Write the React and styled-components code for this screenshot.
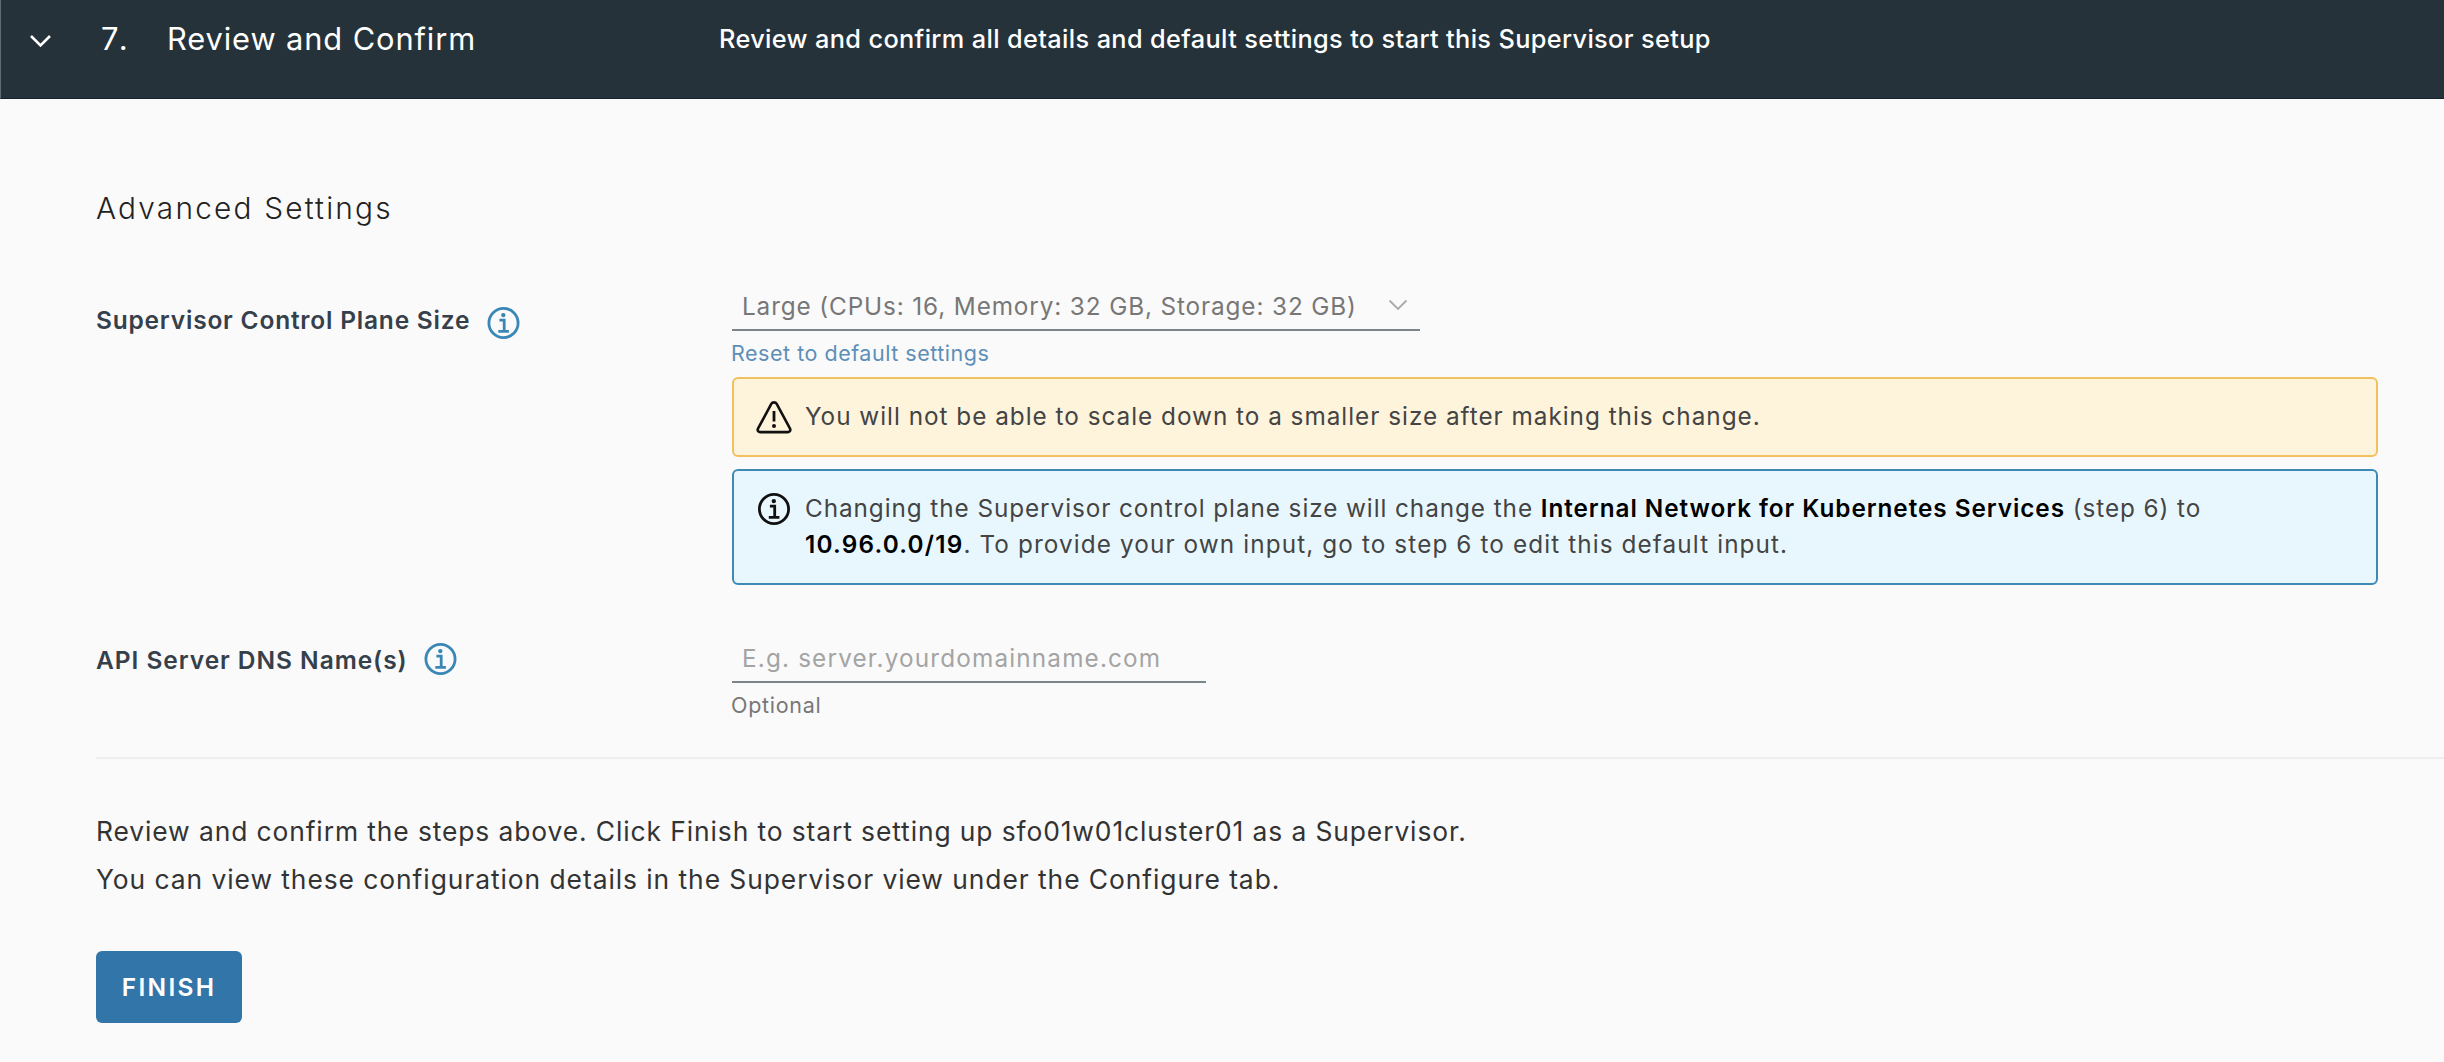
import React from "react";
import styled, { createGlobalStyle } from "styled-components";

const GlobalStyle = createGlobalStyle`
  * { box-sizing: border-box; }
  body {
    margin: 0;
    background: #fafafa;
    font-family: Inter, "Open Sans", sans-serif;
    font-weight: 400;
    color: #444;
  }
`;

const Page = styled.main`
  min-height: 1062px;
  overflow: hidden;
`;

const StepHeader = styled.header`
  height: 99px;
  display: flex;
  align-items: flex-start;
  padding-top: 14px;
  background: #25323a;
  border-left: 1px solid #5d6b73;
  border-bottom: 1px solid #17242b;
  color: #fff;
  font-weight: 500;
  white-space: nowrap;
`;

const HeaderCaret = styled.svg`
  width: 23px;
  height: 16px;
  margin: 19px 0 0 28px;
`;

const StepNumber = styled.span`
  width: 66px;
  margin-left: 49px;
  font-size: 31px;
  font-weight: 400;
  line-height: 50px;
  letter-spacing: 4px;
`;

const StepTitle = styled.h2`
  width: 552px;
  margin: 0;
  font-size: 30.8px;
  font-weight: 400;
  line-height: 50px;
  letter-spacing: 0.9px;
`;

const StepSummary = styled.span`
  font-size: 25.3px;
  line-height: 50px;
  letter-spacing: 0.36px;
`;

const Body = styled.section`
  padding: 89px 0 0 96px;
`;

const SectionTitle = styled.h3`
  margin: 0;
  font-size: 29.8px;
  font-weight: 300;
  line-height: 40px;
  letter-spacing: 2.2px;
  color: #222;
`;

const FormRow = styled.div`
  display: grid;
  grid-template-columns: 636px 1646px;
  margin-top: ${(p) => p.$top}px;
`;

const Label = styled.div`
  display: flex;
  align-items: flex-start;
  gap: ${(p) => p.$gap}px;
  padding-top: ${(p) => p.$drop}px;
  font-size: 24.5px;
  font-weight: 600;
  line-height: 36px;
  letter-spacing: ${(p) => p.$track}px;
  color: #36404a;
  white-space: nowrap;
`;

const LabelIcon = styled.svg`
  width: 33px;
  height: 33px;
  margin-top: ${(p) => p.$drop}px;
  color: #3a87b5;
`;

const Control = styled.div`
  min-width: 0;
`;

const Field = styled.div`
  width: ${(p) => p.$width}px;
  height: 43px;
  display: flex;
  justify-content: space-between;
  padding: 0 12px 0 10px;
  border-bottom: 2px solid #7b858c;
  font-size: 24.3px;
  line-height: 36px;
  letter-spacing: ${(p) => p.$track}px;
  color: ${(p) => p.$color};
  white-space: nowrap;
`;

const FieldCaret = styled.svg`
  width: 20px;
  height: 12px;
  margin-top: 11px;
`;

const Hint = styled.div`
  margin: 7px 0 0 -1px;
  font-size: 21.5px;
  line-height: 30px;
  letter-spacing: ${(p) => p.$track}px;
  color: ${(p) => p.$color};
`;

const Alert = styled.div`
  display: flex;
  gap: 13px;
  height: ${(p) => p.$height}px;
  margin-top: ${(p) => p.$top}px;
  padding: 19px 22px;
  border: 2px solid ${(p) => p.$border};
  border-radius: 6px;
  background: ${(p) => p.$fill};
`;

const AlertIcon = styled.svg`
  flex: none;
  width: 36px;
  height: 33px;
  margin-top: 3px;
  color: #111;
`;

const AlertText = styled.div`
  font-size: 24.3px;
  line-height: 36px;
  white-space: nowrap;
`;

const AlertLine = styled.p`
  margin: 0;
  letter-spacing: ${(p) => p.$track}px;
`;

const Strong = styled.b`
  font-weight: 600;
  letter-spacing: ${(p) => p.$track}px;
  color: #000;
`;

const Divider = styled.hr`
  height: 2px;
  margin: 37px 0 48px;
  border: 0;
  background: #eeeeee;
`;

const Closing = styled.p`
  margin: 0;
  font-size: 26.4px;
  line-height: 48px;
  letter-spacing: ${(p) => p.$track}px;
  color: #333;
`;

const FinishButton = styled.button`
  width: 146px;
  height: 72px;
  margin-top: 48px;
  padding: 0;
  border: 0;
  border-radius: 6px;
  background: #3276a9;
  color: #fff;
  font-family: inherit;
  font-size: 24.5px;
  font-weight: 600;
  letter-spacing: 2.3px;
`;

const InfoShape = () => (
  <g fill="none" stroke="currentColor" strokeWidth="2.8">
    <circle cx="16.5" cy="16" r="14.6" />
    <circle cx="16.3" cy="8.1" r="2.2" fill="currentColor" stroke="none" />
    <path d="M12.4 13.2h4.8v11.4M11.3 24.3h10.6" />
  </g>
);

const LabelInfo = ({ drop }) => (
  <LabelIcon $drop={drop} viewBox="0 0 33 33">
    <InfoShape />
  </LabelIcon>
);

export default function App() {
  return (
    <Page>
      <GlobalStyle />
      <StepHeader>
        <HeaderCaret viewBox="0 0 23 16">
          <path d="M2 3l9.5 9.5L21 3" fill="none" stroke="#fff" strokeWidth="2.6" />
        </HeaderCaret>
        <StepNumber>7.</StepNumber>
        <StepTitle>Review and Confirm</StepTitle>
        <StepSummary>
          Review and confirm all details and default settings to start this Supervisor setup
        </StepSummary>
      </StepHeader>

      <Body>
        <SectionTitle>Advanced Settings</SectionTitle>

        <FormRow $top={60}>
          <Label $drop={14} $gap={17} $track={0.79}>
            Supervisor Control Plane Size
            <LabelInfo drop={5} />
          </Label>
          <Control>
            <Field $width={688} $track={0.88} $color="#777">
              Large (CPUs: 16, Memory: 32 GB, Storage: 32 GB)
              <FieldCaret viewBox="0 0 20 12">
                <path d="M1.5 1.5l8.5 8.5 8.5-8.5" fill="none" stroke="#aaa" strokeWidth="1.8" />
              </FieldCaret>
            </Field>
            <Hint $track={0.52} $color="#5e8fb8">Reset to default settings</Hint>
            <Alert $height={80} $top={9} $border="#f3c05e" $fill="#fef3db">
              <AlertIcon viewBox="0 0 36 33">
                <g fill="none" stroke="currentColor" strokeWidth="2.6">
                  <path
                    d="M15.3 2.9 2.1 27.4c-1.1 2 .2 3.7 2.3 3.7h27.2c2.1 0 3.4-1.7 2.3-3.7L20.7 2.9c-1.2-2.1-4.2-2.1-5.4 0z"
                    strokeLinejoin="round"
                  />
                  <path d="M18 10v10.5" strokeWidth="2.8" />
                  <circle cx="18" cy="25" r="2" fill="currentColor" stroke="none" />
                </g>
              </AlertIcon>
              <AlertText>
                <AlertLine $track={0.99}>
                  You will not be able to scale down to a smaller size after making this change.
                </AlertLine>
              </AlertText>
            </Alert>
            <Alert $height={116} $top={12} $border="#3f8ab4" $fill="#e8f7fe">
              <AlertIcon viewBox="-1.5 0 36 33">
                <InfoShape />
              </AlertIcon>
              <AlertText>
                <AlertLine $track={0.93}>
                  Changing the Supervisor control plane size will change the{" "}
                  <Strong $track={0.95}>Internal Network for Kubernetes Services</Strong> (step 6) to
                </AlertLine>
                <AlertLine $track={1.11}>
                  <Strong $track={1.2}>10.96.0.0/19</Strong>. To provide your own input, go to step 6 to edit
                  this default input.
                </AlertLine>
              </AlertText>
            </Alert>
          </Control>
        </FormRow>

        <FormRow $top={55}>
          <Label $drop={2} $gap={16} $track={0.95}>
            API Server DNS Name(s)
            <LabelInfo drop={1} />
          </Label>
          <Control>
            <Field $width={474} $track={1.16} $color="#a4a4a4">
              E.g. server.yourdomainname.com
            </Field>
            <Hint $track={0.7} $color="#777">Optional</Hint>
          </Control>
        </FormRow>

        <Divider />

        <Closing $track={0.9}>
          Review and confirm the steps above. Click Finish to start setting up sfo01w01cluster01 as a Supervisor.
        </Closing>
        <Closing $track={0.94}>
          You can view these configuration details in the Supervisor view under the Configure tab.
        </Closing>
        <FinishButton type="button">FINISH</FinishButton>
      </Body>
    </Page>
  );
}
